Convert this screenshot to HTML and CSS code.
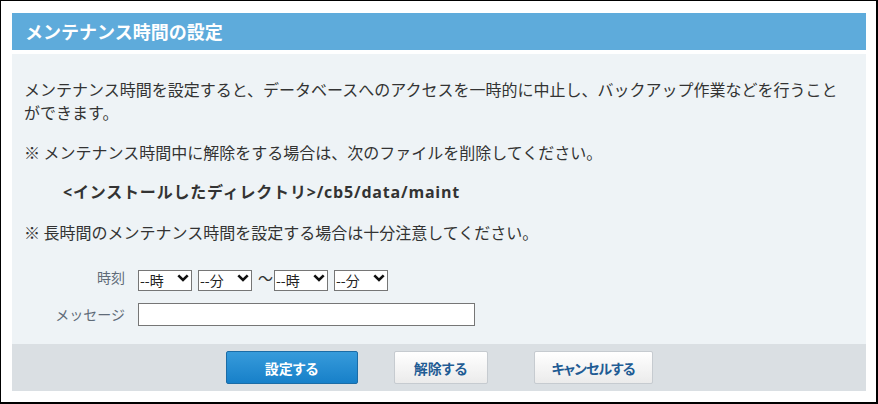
FILE: index.html
```html
<!DOCTYPE html>
<html lang="ja">
<head>
<meta charset="utf-8">
<title>メンテナンス時間の設定</title>
<link rel="stylesheet" href="styles.css">
</head>
<body>
<div class="frame">
  <h1 class="title">メンテナンス時間の設定</h1>
  <div class="panel">
    <p class="text">メンテナンス時間を設定すると、データベースへのアクセスを一時的に中止し、バックアップ作業などを行うことができます。</p>
    <p class="text">※ メンテナンス時間中に解除をする場合は、次のファイルを削除してください。</p>
    <p class="text path">&lt;インストールしたディレクトリ&gt;/cb5/data/maint</p>
    <p class="text">※ 長時間のメンテナンス時間を設定する場合は十分注意してください。</p>
    <div class="form">
      <div class="label">時刻</div>
      <div class="times">
        <span class="sel"><select><option>--時</option></select><svg class="chev" viewBox="0 0 12 8"><path d="M1.3 1.3 L6 6 L10.7 1.3" fill="none" stroke="#111" stroke-width="2.6"/></svg></span>
        <span class="sel"><select><option>--分</option></select><svg class="chev" viewBox="0 0 12 8"><path d="M1.3 1.3 L6 6 L10.7 1.3" fill="none" stroke="#111" stroke-width="2.6"/></svg></span>
        <span class="tilde">～</span>
        <span class="sel"><select><option>--時</option></select><svg class="chev" viewBox="0 0 12 8"><path d="M1.3 1.3 L6 6 L10.7 1.3" fill="none" stroke="#111" stroke-width="2.6"/></svg></span>
        <span class="sel"><select><option>--分</option></select><svg class="chev" viewBox="0 0 12 8"><path d="M1.3 1.3 L6 6 L10.7 1.3" fill="none" stroke="#111" stroke-width="2.6"/></svg></span>
      </div>
      <div class="label">メッセージ</div>
      <div><input class="msg" type="text"></div>
    </div>
  </div>
  <div class="footer">
    <button class="btn primary">設定する</button>
    <button class="btn second">解除する</button>
    <button class="btn third">キャンセルする</button>
  </div>
</div>
</body>
</html>
```

FILE: styles.css
```css
html, body {
  margin: 0;
  padding: 0;
  background: #fff;
}
body {
  font-family: "Noto Sans CJK JP", "Noto Sans", sans-serif;
  color: #333;
}
.frame {
  box-sizing: border-box;
  width: 878px;
  height: 404px;
  border-style: solid;
  border-color: #000;
  border-width: 1px 2px 2px 1px;
  padding: 12px 10px 11px 11px;
  display: flex;
  flex-direction: column;
}
.title {
  margin: 0 0 4px 0;
  height: 37px;
  box-sizing: border-box;
  padding-left: 13px;
  background: #5eabdb;
  color: #fff;
  font-size: 18px;
  font-weight: bold;
  line-height: 37px;
}
.panel {
  background: #eef3f6;
  padding: 24px 24px 18px 12px;
}
.text {
  margin: 0 0 17px 0;
  font-size: 16px;
  line-height: 23px;
}
.path {
  font-family: "Open Sans", "Noto Sans CJK JP", sans-serif;
  font-weight: bold;
  letter-spacing: 0.8px;
  padding-left: 39px;
}
.form {
  margin-top: 22px;
  display: grid;
  grid-template-columns: 101px 1fr;
  column-gap: 13px;
  row-gap: 14px;
  align-items: center;
}
.label {
  text-align: right;
  font-size: 14px;
  color: #5f6b78;
  line-height: 23px;
}
.times {
  display: flex;
  align-items: center;
  height: 23px;
}
.sel {
  position: relative;
  display: inline-block;
  width: 54px;
  height: 21px;
  margin-right: 6px;
}
.sel select {
  appearance: none;
  -webkit-appearance: none;
  box-sizing: border-box;
  width: 54px;
  height: 21px;
  margin: 0;
  padding: 0 0 0 1px;
  border: 1px solid #767676;
  border-radius: 0;
  background: #fff;
  font-family: "Noto Sans CJK JP", sans-serif;
  font-size: 14px;
  line-height: 19px;
  color: #222;
}
.chev {
  position: absolute;
  right: 3px;
  top: 7px;
  width: 12px;
  height: 8px;
  pointer-events: none;
}
.tilde {
  font-size: 15px;
  color: #333;
  width: 16px;
  line-height: 21px;
}
.msg {
  box-sizing: border-box;
  width: 337px;
  height: 23px;
  margin: 0;
  border: 1px solid #767676;
  border-radius: 0;
  background: #fff;
  display: block;
}
.footer {
  background: #dadfe3;
  padding: 7px 0;
  display: flex;
  justify-content: center;
}
.btn {
  box-sizing: border-box;
  height: 33px;
  padding: 0;
  margin: 0;
  white-space: nowrap;
  border: 1px solid #c6cbd0;
  border-radius: 2px;
  background: linear-gradient(#ffffff, #ebebeb);
  color: #1f5c94;
  font-family: "Noto Sans CJK JP", sans-serif;
  font-size: 14px;
  font-weight: bold;
  font-feature-settings: "palt";
}
.primary {
  width: 132px;
  margin-right: 36px;
  border-color: #1b6ca6;
  background: linear-gradient(#379bdb, #1780c9);
  color: #fff;
}
.second {
  width: 94px;
  margin-right: 46px;
}
.third {
  width: 119px;
  letter-spacing: -1px;
}
```
